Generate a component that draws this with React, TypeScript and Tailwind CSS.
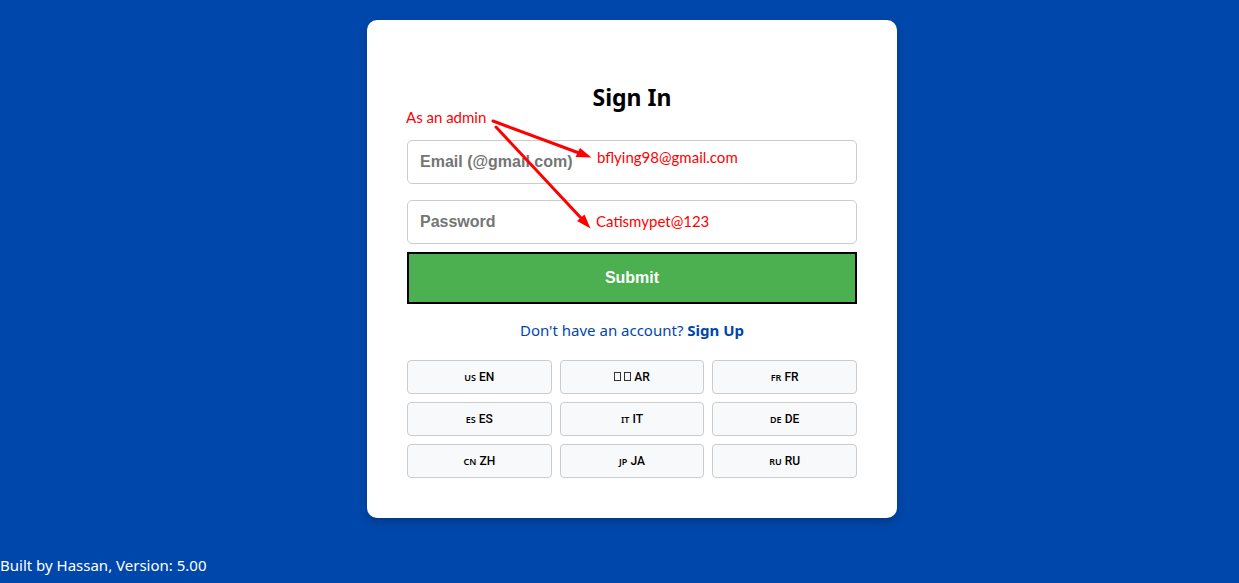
type Language = { flag: string; code: string };

const languages: Language[] = [
  { flag: 'US', code: 'EN' },
  { flag: '', code: 'AR' },
  { flag: 'FR', code: 'FR' },
  { flag: 'ES', code: 'ES' },
  { flag: 'IT', code: 'IT' },
  { flag: 'DE', code: 'DE' },
  { flag: 'CN', code: 'ZH' },
  { flag: 'JP', code: 'JA' },
  { flag: 'RU', code: 'RU' },
];

const fieldClass =
  "block h-11 w-full rounded-[5px] border border-[#ccc] bg-white px-3 font-['Liberation_Sans',sans-serif] text-base font-bold text-black placeholder:text-[#757575] focus:outline-[#0047ab]";

function LanguageButton({ flag, code }: Language) {
  return (
    <button
      type="button"
      className="flex h-[34px] items-baseline justify-center gap-[3px] rounded border border-[#ccc] bg-[#f8f9fa] pt-2 font-['Roboto',sans-serif] text-xs leading-4 font-medium text-black"
    >
      {flag ? (
        <span className="font-['Noto_Sans',sans-serif] text-[9px] leading-[18px] font-semibold">{flag}</span>
      ) : (
        <span className="flex gap-[3px]" aria-hidden="true">
          <span className="h-[9px] w-[7px] border border-[#333]" />
          <span className="h-[9px] w-[7px] border border-[#333]" />
        </span>
      )}
      <span>{code}</span>
    </button>
  );
}

function Annotations() {
  return (
    <div className="pointer-events-none absolute inset-0 font-['Lato',sans-serif] text-[15px] leading-5 text-[#f00]">
      <svg className="absolute top-0 left-0 overflow-visible" width="530" height="220" fill="#f00" aria-hidden="true">
        <g stroke="#f00" strokeWidth="3" strokeLinecap="round">
          <path d="M126 101 212 133" />
          <path d="M129 107 214 198" />
        </g>
        <path d="M224.500 137.500 208.500 137 213 128Z" />
        <path d="M223.500 208.500 210 201 217.500 194.500Z" />
      </svg>
      <span className="absolute top-[87px] left-[39px]">As an admin</span>
      <span className="absolute top-[127px] left-[230px]">bflying98@gmail.com</span>
      <span className="absolute top-[191px] left-[229px]">Catismypet@123</span>
    </div>
  );
}

export default function App() {
  return (
    <div className="flex min-h-screen flex-col justify-between bg-[#0047ab] font-['Noto_Sans',sans-serif] text-base">
      <main className="flex justify-center pt-5 pl-[25px]">
        <section className="relative w-full max-w-[530px] rounded-[10px] bg-white px-10 pt-[60px] pb-10 shadow-[0_4px_8px_rgba(0,0,0,0.2)]">
          <h1 className="mb-[26px] text-center text-[23px] leading-[34px] font-bold text-black">Sign In</h1>
          <form onSubmit={(event) => event.preventDefault()}>
            <input type="email" aria-label="Email" placeholder="Email (@gmail.com)" className={fieldClass} />
            <input type="password" aria-label="Password" placeholder="Password" className={`${fieldClass} mt-4`} />
            <button
              type="submit"
              className="mt-2 h-[52px] w-full border-2 border-black bg-[#4caf50] font-['Liberation_Sans',sans-serif] text-base font-bold text-white"
            >
              Submit
            </button>
          </form>
          <p className="mt-3.5 text-center text-[15px] leading-6 text-[#0047ab]">
            Don't have an account?{' '}
            <a href="#signup" className="font-bold">
              Sign Up
            </a>
          </p>
          <div className="mt-[18px] grid grid-cols-3 gap-2">
            {languages.map((language) => (
              <LanguageButton key={language.code} {...language} />
            ))}
          </div>
          <Annotations />
        </section>
      </main>
      <footer className="pb-[6px] text-[15px] leading-6 text-white">Built by Hassan, Version: 5.00</footer>
    </div>
  );
}
